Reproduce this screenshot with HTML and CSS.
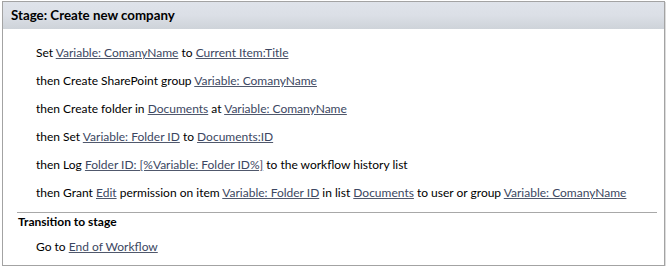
FILE: index.html
```html
<!DOCTYPE html>
<html lang="en">
  <head>
    <meta charset="utf-8" />
    <link rel="stylesheet" href="styles.css">
  </head>
  <body>
    <section class="stage">
      <h1 class="stage-title">Stage: Create new company</h1>

      <div class="steps">
        <p class="step">Set <a>Variable: ComanyName</a> to <a>Current Item:Title</a></p>
        <p class="step">then Create SharePoint group <a>Variable: ComanyName</a></p>
        <p class="step">then Create folder in <a>Documents</a> at <a>Variable: ComanyName</a></p>
        <p class="step">then Set <a>Variable: Folder ID</a> to <a>Documents:ID</a></p>
        <p class="step">then Log <a>Folder ID: [%Variable: Folder ID%]</a> to the workflow history list</p>
        <p class="step">then Grant <a>Edit</a> permission on item <a>Variable: Folder ID</a> in list <a>Documents</a> to user or group <a>Variable: ComanyName</a></p>
      </div>

      <div class="transition">
        <h2 class="transition-title">Transition to stage</h2>
        <p class="step">Go to <a>End of Workflow</a></p>
      </div>
    </section>
  </body>
</html>
```

FILE: styles.css
```css
body {
  margin: 0;
  background: #fff;
  color: #000;
  font-family: Lato, "Noto Sans", sans-serif;
  font-size: 12px;
}

p,
h1,
h2 {
  margin: 0;
}

a {
  color: #3c4762;
  text-decoration: underline;
  text-decoration-color: #50586c;
}

.stage {
  margin: 1px 0 0 2px;
  width: 661px;
  height: 263px;
  border: 1px solid #a3a3a3;
  box-shadow: 1px 1px 0 #dcdcdc;
  display: flex;
  flex-direction: column;
}

.stage-title {
  height: 27px;
  line-height: 27px;
  padding-left: 8px;
  font-size: 13.3px;
  font-weight: bold;
  background: linear-gradient(#dfe3ea, #dbdfe6 50%, #ced3d9);
}

.steps {
  padding: 10px 0 0 33px;
}

.step {
  line-height: 28px;
  white-space: nowrap;
}

.transition {
  margin: 5px 7px 0 14px;
  border-top: 1px solid #a8a8a8;
}

.transition-title {
  padding-left: 1px;
  line-height: 18px;
  font-size: 12px;
  font-weight: bold;
}

.transition .step {
  padding: 2px 0 0 19px;
}
```
